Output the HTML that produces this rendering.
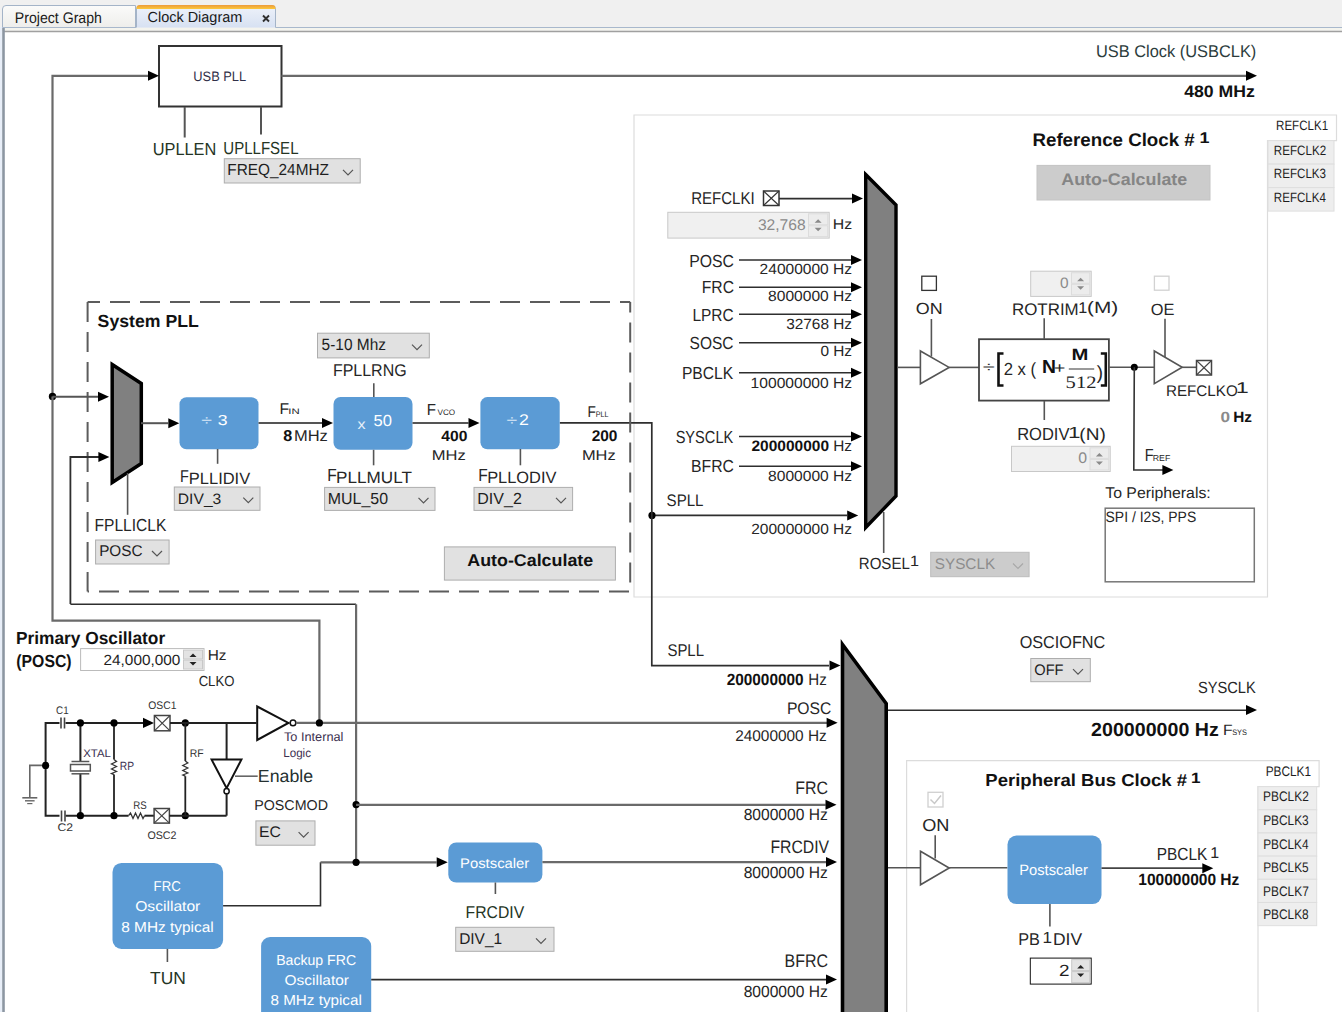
<!DOCTYPE html><html><head><meta charset="utf-8"><style>html,body{margin:0;padding:0;background:#fff;overflow:hidden}svg{display:block}</style></head><body>
<svg width="1342" height="1012" viewBox="0 0 1342 1012" font-family="Liberation Sans" text-rendering="geometricPrecision">
<defs><linearGradient id="tabg" x1="0" y1="0" x2="0" y2="1"><stop offset="0" stop-color="#fbfbfa"/><stop offset="1" stop-color="#eeeeeb"/></linearGradient><linearGradient id="tabs" x1="0" y1="0" x2="0" y2="1"><stop offset="0" stop-color="#eef2fa"/><stop offset="1" stop-color="#d7e1f2"/></linearGradient><linearGradient id="org" x1="0" y1="0" x2="0" y2="1"><stop offset="0" stop-color="#ec9a3c"/><stop offset="1" stop-color="#fcc93a"/></linearGradient></defs>
<rect x="0" y="0" width="1342.0" height="31.0" fill="#f0f0f0" stroke="none" stroke-width="1" rx="0"/>
<path d="M2.5,27.5 L2.5,9 Q2.5,5.5 6,5.5 L135.5,5.5 L135.5,27.5" fill="url(#tabg)" stroke="#a4b4c8" stroke-width="1"/>
<text x="14.84" y="22.6" font-size="15.41" font-weight="normal" fill="#1a1a1a" textLength="87.07" lengthAdjust="spacingAndGlyphs" font-family="Liberation Sans">Project Graph</text>
<path d="M136.5,27.5 L136.5,9 Q136.5,5.5 140,5.5 L272,5.5 Q275.5,5.5 275.5,9 L275.5,27.5" fill="url(#tabs)" stroke="#a4b4c8" stroke-width="1"/>
<path d="M136.5,9 L136.5,8 Q136.5,5 140,5 L272,5 Q275.5,5 275.5,8 L275.5,9 Z" fill="url(#org)"/>
<text x="147.48" y="22.1" font-size="14.68" font-weight="normal" fill="#1a1a1a" textLength="94.87" lengthAdjust="spacingAndGlyphs" font-family="Liberation Sans">Clock Diagram</text>
<path d="M263,15.5 L269,21.5 M269,15.5 L263,21.5" stroke="#303030" stroke-width="1.9"/>
<line x1="0" y1="27.5" x2="136" y2="27.5" stroke="#a8b8cc" stroke-width="1"/>
<line x1="275.5" y1="27.5" x2="1342" y2="27.5" stroke="#a8b8cc" stroke-width="1"/>
<rect x="0" y="28" width="1342.0" height="2.5" fill="#f4f4ee" stroke="none" stroke-width="1" rx="0"/>
<line x1="3" y1="31.5" x2="1342" y2="31.5" stroke="#a0a0a0" stroke-width="1.6"/>
<rect x="0" y="27" width="2.2" height="985.0" fill="#e8eef8" stroke="none" stroke-width="1" rx="0"/>
<line x1="3.5" y1="28" x2="3.5" y2="1012" stroke="#8c96a2" stroke-width="2.6"/>
<rect x="159" y="46" width="122.5" height="60.5" fill="#fff" stroke="#333" stroke-width="2" rx="0"/>
<text x="193.31" y="81.4" font-size="13.66" font-weight="normal" fill="#303048" textLength="52.82" lengthAdjust="spacingAndGlyphs" font-family="Liberation Sans">USB PLL</text>
<polyline points="52.5,396.5 52.5,75.8 148,75.8" stroke="#6a6a6a" stroke-width="2.2" fill="none" stroke-linejoin="miter"/>
<polygon points="159,75.8 148,70.8 148,80.8" stroke="none" stroke-width="0" fill="#000" stroke-linejoin="miter"/>
<line x1="281.5" y1="75.8" x2="1246" y2="75.8" stroke="#6a6a6a" stroke-width="2.2"/>
<polygon points="1257,75.8 1246,70.8 1246,80.8" stroke="none" stroke-width="0" fill="#000" stroke-linejoin="miter"/>
<line x1="184.7" y1="107" x2="184.7" y2="137.5" stroke="#555" stroke-width="2"/>
<line x1="261" y1="107" x2="261" y2="134.6" stroke="#555" stroke-width="2"/>
<text x="152.74" y="154.5" font-size="17.44" font-weight="normal" fill="#243424" textLength="63.59" lengthAdjust="spacingAndGlyphs" font-family="Liberation Sans">UPLLEN</text>
<text x="223.34" y="153.5" font-size="17.44" font-weight="normal" fill="#243424" textLength="75.16" lengthAdjust="spacingAndGlyphs" font-family="Liberation Sans">UPLLFSEL</text>
<rect x="224.3" y="158.7" width="135.9" height="24.3" fill="#e1e1e1" stroke="#adadad" stroke-width="1" rx="0"/>
<text x="227.34" y="175.3" font-size="15.99" font-weight="normal" fill="#1e1e1e" textLength="101.63" lengthAdjust="spacingAndGlyphs" font-family="Liberation Sans">FREQ_24MHZ</text>
<polyline points="343.0,169.85 348,174.85 353.0,169.85" fill="none" stroke="#555" stroke-width="1.2"/>
<text x="1095.94" y="57.3" font-size="17.01" font-weight="normal" fill="#2c3c3c" textLength="160.38" lengthAdjust="spacingAndGlyphs" font-family="Liberation Sans">USB Clock (USBCLK)</text>
<text x="1184.23" y="97.0" font-size="16.57" font-weight="bold" fill="#111" textLength="70.71" lengthAdjust="spacingAndGlyphs" font-family="Liberation Sans">480 MHz</text>
<path d="M634,115 H1336.5 V140.6 H1267.5 V597 H634 Z" fill="#fff" stroke="#dcdcdc" stroke-width="1.2"/>
<rect x="1268" y="140.6" width="66.0" height="23.5" fill="#eeeeee" stroke="#dedede" stroke-width="1" rx="0"/>
<text x="1273.85" y="154.5" font-size="13.52" font-weight="normal" fill="#1e1e1e" textLength="52.24" lengthAdjust="spacingAndGlyphs" font-family="Liberation Sans">REFCLK2</text>
<rect x="1268" y="164.1" width="66.0" height="23.5" fill="#eeeeee" stroke="#dedede" stroke-width="1" rx="0"/>
<text x="1273.85" y="178.0" font-size="13.52" font-weight="normal" fill="#1e1e1e" textLength="52.15" lengthAdjust="spacingAndGlyphs" font-family="Liberation Sans">REFCLK3</text>
<rect x="1268" y="187.6" width="66.0" height="23.5" fill="#eeeeee" stroke="#dedede" stroke-width="1" rx="0"/>
<text x="1273.85" y="201.6" font-size="13.52" font-weight="normal" fill="#1e1e1e" textLength="51.99" lengthAdjust="spacingAndGlyphs" font-family="Liberation Sans">REFCLK4</text>
<text x="1276.05" y="130.0" font-size="13.52" font-weight="normal" fill="#1e1e1e" textLength="52.01" lengthAdjust="spacingAndGlyphs" font-family="Liberation Sans">REFCLK1</text>
<text x="1032.47" y="145.5" font-size="18.31" font-weight="bold" fill="#111" textLength="162.21" lengthAdjust="spacingAndGlyphs" font-family="Liberation Sans">Reference Clock #</text>
<text x="1199.48" y="142.6" font-size="15.50" font-weight="bold" fill="#111" textLength="10.00" lengthAdjust="spacingAndGlyphs" font-family="Liberation Sans">1</text>
<rect x="1037" y="165.4" width="173.0" height="34.6" fill="#cccccc" stroke="#c4c4c4" stroke-width="1" rx="0"/>
<text x="1061.27" y="184.7" font-size="16.86" font-weight="bold" fill="#858585" textLength="125.94" lengthAdjust="spacingAndGlyphs" font-family="Liberation Sans">Auto-Calculate</text>
<text x="691.17" y="203.8" font-size="17.15" font-weight="normal" fill="#262626" textLength="63.52" lengthAdjust="spacingAndGlyphs" font-family="Liberation Sans">REFCLKI</text>
<rect x="763.5" y="191" width="15.5" height="14.5" fill="#fff" stroke="#333" stroke-width="1.5" rx="0"/>
<line x1="763.5" y1="191" x2="779" y2="205.5" stroke="#333" stroke-width="1.1"/>
<line x1="763.5" y1="205.5" x2="779" y2="191" stroke="#333" stroke-width="1.1"/>
<line x1="779" y1="198.6" x2="852" y2="198.6" stroke="#2e2e2e" stroke-width="1.6"/>
<polygon points="863,198.6 852,193.6 852,203.6" stroke="none" stroke-width="0" fill="#000" stroke-linejoin="miter"/>
<rect x="667.8" y="212.3" width="161.4" height="25.8" fill="#f0f0f0" stroke="#c8c8c8" stroke-width="1" rx="0"/>
<text x="757.91" y="229.9" font-size="15.55" font-weight="normal" fill="#8a8a8a" textLength="47.77" lengthAdjust="spacingAndGlyphs" font-family="Liberation Sans">32,768</text>
<rect x="808.5" y="213.8" width="19.2" height="10.9" fill="#ececec" stroke="#dcdcdc" stroke-width="1" rx="0"/>
<rect x="808.5" y="225.7" width="19.2" height="10.9" fill="#ececec" stroke="#dcdcdc" stroke-width="1" rx="0"/>
<polygon points="814.6,222.7 821.6,222.7 818.1,219.2" stroke="none" stroke-width="0" fill="#8a8a8a" stroke-linejoin="miter"/>
<polygon points="814.6,227.7 821.6,227.7 818.1,231.2" stroke="none" stroke-width="0" fill="#8a8a8a" stroke-linejoin="miter"/>
<text x="832.70" y="229.0" font-size="14.24" font-weight="normal" fill="#262626" textLength="19.38" lengthAdjust="spacingAndGlyphs" font-family="Liberation Sans">Hz</text>
<text x="689.20" y="267.1" font-size="17.44" font-weight="normal" fill="#262626" textLength="44.78" lengthAdjust="spacingAndGlyphs" font-family="Liberation Sans">POSC</text>
<line x1="739" y1="260" x2="851" y2="260" stroke="#2e2e2e" stroke-width="1.6"/>
<polygon points="862,260 851,255 851,265" stroke="none" stroke-width="0" fill="#000" stroke-linejoin="miter"/>
<text x="759.62" y="273.6" font-size="14.83" font-weight="normal" fill="#262626" textLength="92.44" lengthAdjust="spacingAndGlyphs" font-family="Liberation Sans">24000000 Hz</text>
<text x="701.71" y="293.2" font-size="17.44" font-weight="normal" fill="#262626" textLength="32.27" lengthAdjust="spacingAndGlyphs" font-family="Liberation Sans">FRC</text>
<line x1="739" y1="287.2" x2="851" y2="287.2" stroke="#2e2e2e" stroke-width="1.6"/>
<polygon points="862,287.2 851,282.2 851,292.2" stroke="none" stroke-width="0" fill="#000" stroke-linejoin="miter"/>
<text x="768.13" y="300.6" font-size="14.83" font-weight="normal" fill="#262626" textLength="83.93" lengthAdjust="spacingAndGlyphs" font-family="Liberation Sans">8000000 Hz</text>
<text x="692.43" y="321.4" font-size="17.44" font-weight="normal" fill="#262626" textLength="41.25" lengthAdjust="spacingAndGlyphs" font-family="Liberation Sans">LPRC</text>
<line x1="739" y1="314.3" x2="851" y2="314.3" stroke="#2e2e2e" stroke-width="1.6"/>
<polygon points="862,314.3 851,309.3 851,319.3" stroke="none" stroke-width="0" fill="#000" stroke-linejoin="miter"/>
<text x="786.22" y="328.9" font-size="14.83" font-weight="normal" fill="#262626" textLength="65.83" lengthAdjust="spacingAndGlyphs" font-family="Liberation Sans">32768 Hz</text>
<text x="689.60" y="348.8" font-size="17.44" font-weight="normal" fill="#262626" textLength="43.97" lengthAdjust="spacingAndGlyphs" font-family="Liberation Sans">SOSC</text>
<line x1="739" y1="342.8" x2="851" y2="342.8" stroke="#2e2e2e" stroke-width="1.6"/>
<polygon points="862,342.8 851,337.8 851,347.8" stroke="none" stroke-width="0" fill="#000" stroke-linejoin="miter"/>
<text x="820.40" y="355.9" font-size="14.83" font-weight="normal" fill="#262626" textLength="31.66" lengthAdjust="spacingAndGlyphs" font-family="Liberation Sans">0 Hz</text>
<text x="681.92" y="378.6" font-size="17.44" font-weight="normal" fill="#262626" textLength="51.26" lengthAdjust="spacingAndGlyphs" font-family="Liberation Sans">PBCLK</text>
<line x1="739" y1="372.7" x2="851" y2="372.7" stroke="#2e2e2e" stroke-width="1.6"/>
<polygon points="862,372.7 851,367.7 851,377.7" stroke="none" stroke-width="0" fill="#000" stroke-linejoin="miter"/>
<text x="750.61" y="388.0" font-size="14.83" font-weight="normal" fill="#262626" textLength="101.46" lengthAdjust="spacingAndGlyphs" font-family="Liberation Sans">100000000 Hz</text>
<text x="675.64" y="442.5" font-size="17.44" font-weight="normal" fill="#262626" textLength="57.62" lengthAdjust="spacingAndGlyphs" font-family="Liberation Sans">SYSCLK</text>
<line x1="739" y1="436.5" x2="851" y2="436.5" stroke="#2e2e2e" stroke-width="1.6"/>
<polygon points="862,436.5 851,431.5 851,441.5" stroke="none" stroke-width="0" fill="#000" stroke-linejoin="miter"/>
<text x="691.11" y="472.2" font-size="17.44" font-weight="normal" fill="#262626" textLength="42.88" lengthAdjust="spacingAndGlyphs" font-family="Liberation Sans">BFRC</text>
<line x1="739" y1="466.2" x2="851" y2="466.2" stroke="#2e2e2e" stroke-width="1.6"/>
<polygon points="862,466.2 851,461.2 851,471.2" stroke="none" stroke-width="0" fill="#000" stroke-linejoin="miter"/>
<text x="768.13" y="481.0" font-size="14.83" font-weight="normal" fill="#262626" textLength="83.93" lengthAdjust="spacingAndGlyphs" font-family="Liberation Sans">8000000 Hz</text>
<text x="751.47" y="450.7" font-size="15.12" font-weight="bold" fill="#111" textLength="77.55" lengthAdjust="spacingAndGlyphs" font-family="Liberation Sans">200000000</text>
<text x="833.24" y="450.7" font-size="15.12" font-weight="normal" fill="#262626" textLength="18.82" lengthAdjust="spacingAndGlyphs" font-family="Liberation Sans">Hz</text>
<text x="666.62" y="506.0" font-size="16.72" font-weight="normal" fill="#262626" textLength="36.88" lengthAdjust="spacingAndGlyphs" font-family="Liberation Sans">SPLL</text>
<line x1="652" y1="515.4" x2="847" y2="515.4" stroke="#2e2e2e" stroke-width="1.6"/>
<polygon points="858.2,515.4 847.2,510.4 847.2,520.4" stroke="none" stroke-width="0" fill="#000" stroke-linejoin="miter"/>
<text x="751.22" y="534.0" font-size="14.83" font-weight="normal" fill="#262626" textLength="100.84" lengthAdjust="spacingAndGlyphs" font-family="Liberation Sans">200000000 Hz</text>
<circle cx="652" cy="515.4" r="3.6" fill="#000"/>
<polyline points="559.7,422.8 651.8,422.8 651.8,665.6 829,665.6" stroke="#2e2e2e" stroke-width="1.7" fill="none" stroke-linejoin="miter"/>
<polygon points="865.7,174.5 896,205 896,496 865.7,527.5" stroke="#000" stroke-width="3.4" fill="#808080" stroke-linejoin="miter"/>
<line x1="883.7" y1="512" x2="883.7" y2="553" stroke="#555" stroke-width="1.6"/>
<text x="858.77" y="569.4" font-size="16.28" font-weight="normal" fill="#262626" textLength="51.03" lengthAdjust="spacingAndGlyphs" font-family="Liberation Sans">ROSEL</text>
<text x="909.97" y="566.4" font-size="15.00" font-weight="normal" fill="#262626" textLength="9.01" lengthAdjust="spacingAndGlyphs" font-family="Liberation Sans">1</text>
<rect x="930.7" y="552.3" width="98.4" height="24.4" fill="#cccccc" stroke="#bcbcbc" stroke-width="1" rx="0"/>
<text x="934.71" y="568.7" font-size="15.26" font-weight="normal" fill="#8c8c8c" textLength="60.46" lengthAdjust="spacingAndGlyphs" font-family="Liberation Sans">SYSCLK</text>
<polyline points="1013.0,563.5 1018,568.5 1023.0,563.5" fill="none" stroke="#a8a8a8" stroke-width="1.2"/>
<line x1="897" y1="367.4" x2="920.4" y2="367.4" stroke="#555" stroke-width="1.6"/>
<polygon points="920.4,351 949.1,367.4 920.4,383.8" stroke="#555" stroke-width="1.6" fill="#fff" stroke-linejoin="miter"/>
<line x1="949.1" y1="367.4" x2="979" y2="367.4" stroke="#555" stroke-width="1.6"/>
<line x1="931.4" y1="319" x2="931.4" y2="356.5" stroke="#555" stroke-width="1.6"/>
<rect x="921.8" y="276.2" width="14.6" height="14.2" fill="#fff" stroke="#333" stroke-width="1.3" rx="0"/>
<text x="915.76" y="314.4" font-size="15.99" font-weight="normal" fill="#262626" textLength="26.90" lengthAdjust="spacingAndGlyphs" font-family="Liberation Sans">ON</text>
<rect x="979" y="339.2" width="129.9" height="61.4" fill="#fff" stroke="#444" stroke-width="1.8" rx="0"/>
<line x1="1044.2" y1="318.2" x2="1044.2" y2="339" stroke="#555" stroke-width="1.6"/>
<line x1="1044.3" y1="401" x2="1044.3" y2="420" stroke="#555" stroke-width="1.6"/>
<rect x="1030.7" y="271.2" width="60.5" height="25.2" fill="#f0f0f0" stroke="#c8c8c8" stroke-width="1" rx="0"/>
<text x="1060.00" y="287.9" font-size="15.12" font-weight="normal" fill="#8a8a8a" textLength="8.59" lengthAdjust="spacingAndGlyphs" font-family="Liberation Sans">0</text>
<rect x="1071.5" y="272.7" width="18.2" height="10.6" fill="#ececec" stroke="#dcdcdc" stroke-width="1" rx="0"/>
<rect x="1071.5" y="284.29999999999995" width="18.2" height="10.6" fill="#ececec" stroke="#dcdcdc" stroke-width="1" rx="0"/>
<polygon points="1077.1,281.29999999999995 1084.1,281.29999999999995 1080.6,277.79999999999995" stroke="none" stroke-width="0" fill="#8a8a8a" stroke-linejoin="miter"/>
<polygon points="1077.1,286.29999999999995 1084.1,286.29999999999995 1080.6,289.79999999999995" stroke="none" stroke-width="0" fill="#8a8a8a" stroke-linejoin="miter"/>
<text x="1012.01" y="315.0" font-size="16.86" font-weight="normal" fill="#262626" textLength="66.67" lengthAdjust="spacingAndGlyphs" font-family="Liberation Sans">ROTRIM</text>
<text x="1078.27" y="312.5" font-size="15.50" font-weight="normal" fill="#262626" textLength="9.01" lengthAdjust="spacingAndGlyphs" font-family="Liberation Sans">1</text>
<text x="1087.11" y="313.0" font-size="16.50" font-weight="normal" fill="#262626" textLength="31.18" lengthAdjust="spacingAndGlyphs" font-family="Liberation Sans">(M)</text>
<text x="982.82" y="371.5" font-size="15.00" font-weight="normal" fill="#333" textLength="12.06" lengthAdjust="spacingAndGlyphs" font-family="Liberation Sans">÷</text>
<path d="M1003.5,353.5 L998.5,353.5 L998.5,385.5 L1003.5,385.5" fill="none" stroke="#111" stroke-width="2.6"/>
<text x="1003.67" y="374.8" font-size="17.50" font-weight="normal" fill="#262626" textLength="32.41" lengthAdjust="spacingAndGlyphs" font-family="Liberation Sans">2 x (</text>
<text x="1042.12" y="373.0" font-size="19.00" font-weight="bold" fill="#111" textLength="13.98" lengthAdjust="spacingAndGlyphs" font-family="Liberation Sans">N</text>
<text x="1053.84" y="373.0" font-size="15.00" font-weight="normal" fill="#262626" textLength="11.63" lengthAdjust="spacingAndGlyphs" font-family="Liberation Sans">+</text>
<line x1="1068.8" y1="369" x2="1094.2" y2="369" stroke="#555" stroke-width="1.2"/>
<text x="1071.56" y="360.0" font-size="16.50" font-weight="bold" fill="#111" textLength="16.87" lengthAdjust="spacingAndGlyphs" font-family="Liberation Sans">M</text>
<text x="1065.61" y="387.9" font-size="17.50" font-weight="normal" fill="#262626" textLength="30.82" lengthAdjust="spacingAndGlyphs" font-family="Liberation Serif">512</text>
<text x="1096.71" y="379.0" font-size="19.00" font-weight="normal" fill="#262626" textLength="6.26" lengthAdjust="spacingAndGlyphs" font-family="Liberation Sans">)</text>
<path d="M1100.8,353.5 L1105.8,353.5 L1105.8,385.5 L1100.8,385.5" fill="none" stroke="#111" stroke-width="2.6"/>
<line x1="1109" y1="367.3" x2="1154.3" y2="367.3" stroke="#555" stroke-width="1.6"/>
<circle cx="1134.3" cy="367.3" r="3.5" fill="#000"/>
<polyline points="1134.3,367.3 1133.8,470 1163,470" stroke="#333" stroke-width="1.6" fill="none" stroke-linejoin="miter"/>
<polygon points="1173.4,470 1162.4,465 1162.4,475" stroke="none" stroke-width="0" fill="#000" stroke-linejoin="miter"/>
<text x="1144.71" y="461.3" font-size="17.59" font-weight="normal" fill="#262626" textLength="8.87" lengthAdjust="spacingAndGlyphs" font-family="Liberation Sans">F</text>
<text x="1152.78" y="461.3" font-size="8.70" font-weight="normal" fill="#262626" textLength="17.57" lengthAdjust="spacingAndGlyphs" font-family="Liberation Sans">REF</text>
<text x="1017.15" y="440.2" font-size="17.59" font-weight="normal" fill="#262626" textLength="52.32" lengthAdjust="spacingAndGlyphs" font-family="Liberation Sans">RODIV</text>
<text x="1068.09" y="438.0" font-size="16.00" font-weight="normal" fill="#262626" textLength="12.49" lengthAdjust="spacingAndGlyphs" font-family="Liberation Sans">1</text>
<text x="1079.32" y="440.0" font-size="17.00" font-weight="normal" fill="#262626" textLength="26.47" lengthAdjust="spacingAndGlyphs" font-family="Liberation Sans">(N)</text>
<rect x="1011.5" y="446.3" width="98.7" height="25.2" fill="#f0f0f0" stroke="#c8c8c8" stroke-width="1" rx="0"/>
<text x="1078.28" y="463.3" font-size="15.26" font-weight="normal" fill="#8a8a8a" textLength="8.82" lengthAdjust="spacingAndGlyphs" font-family="Liberation Sans">0</text>
<rect x="1090" y="447.8" width="18.7" height="10.6" fill="#ececec" stroke="#dcdcdc" stroke-width="1" rx="0"/>
<rect x="1090" y="459.4" width="18.7" height="10.6" fill="#ececec" stroke="#dcdcdc" stroke-width="1" rx="0"/>
<polygon points="1095.85,456.4 1102.85,456.4 1099.35,452.9" stroke="none" stroke-width="0" fill="#8a8a8a" stroke-linejoin="miter"/>
<polygon points="1095.85,461.4 1102.85,461.4 1099.35,464.9" stroke="none" stroke-width="0" fill="#8a8a8a" stroke-linejoin="miter"/>
<polygon points="1154.3,351 1182.2,367.3 1154.3,383.6" stroke="#555" stroke-width="1.6" fill="#fff" stroke-linejoin="miter"/>
<line x1="1165" y1="318.7" x2="1165" y2="357" stroke="#555" stroke-width="1.6"/>
<rect x="1154.4" y="276.2" width="14.6" height="14.0" fill="#fff" stroke="#d2d2d2" stroke-width="1.3" rx="0"/>
<text x="1150.83" y="314.8" font-size="16.28" font-weight="normal" fill="#262626" textLength="23.65" lengthAdjust="spacingAndGlyphs" font-family="Liberation Sans">OE</text>
<line x1="1182.2" y1="367.3" x2="1196" y2="367.3" stroke="#555" stroke-width="1.6"/>
<rect x="1196.5" y="360.5" width="15.0" height="14.5" fill="#fff" stroke="#444" stroke-width="1.5" rx="0"/>
<line x1="1196.5" y1="360.5" x2="1211.5" y2="375" stroke="#444" stroke-width="1.1"/>
<line x1="1196.5" y1="375" x2="1211.5" y2="360.5" stroke="#444" stroke-width="1.1"/>
<text x="1165.95" y="396.0" font-size="15.41" font-weight="normal" fill="#262626" textLength="71.78" lengthAdjust="spacingAndGlyphs" font-family="Liberation Sans">REFCLKO</text>
<text x="1235.72" y="393.4" font-size="15.50" font-weight="normal" fill="#262626" textLength="13.00" lengthAdjust="spacingAndGlyphs" font-family="Liberation Sans">1</text>
<text x="1220.63" y="422.2" font-size="14.83" font-weight="bold" fill="#8a8a8a" textLength="9.56" lengthAdjust="spacingAndGlyphs" font-family="Liberation Sans">0</text>
<text x="1233.29" y="422.2" font-size="14.83" font-weight="bold" fill="#111" textLength="18.77" lengthAdjust="spacingAndGlyphs" font-family="Liberation Sans">Hz</text>
<text x="1105.25" y="497.5" font-size="15.50" font-weight="normal" fill="#262626" textLength="105.49" lengthAdjust="spacingAndGlyphs" font-family="Liberation Sans">To Peripherals:</text>
<rect x="1105.2" y="508.2" width="149.1" height="73.6" fill="#fff" stroke="#777" stroke-width="1.5" rx="0"/>
<text x="1105.57" y="522.3" font-size="15.00" font-weight="normal" fill="#262626" textLength="90.65" lengthAdjust="spacingAndGlyphs" font-family="Liberation Sans">SPI / I2S, PPS</text>
<line x1="87.6" y1="302.1" x2="630.2" y2="302.1" stroke="#5c5c5c" stroke-width="2" stroke-dasharray="20 10" stroke-dashoffset="7.6"/>
<line x1="87.6" y1="302.1" x2="87.6" y2="591.4" stroke="#5c5c5c" stroke-width="2" stroke-dasharray="20 10" stroke-dashoffset="0"/>
<line x1="630.2" y1="302.1" x2="630.2" y2="591.4" stroke="#5c5c5c" stroke-width="2" stroke-dasharray="20 10" stroke-dashoffset="9.5"/>
<line x1="87.6" y1="591.4" x2="630.2" y2="591.4" stroke="#5c5c5c" stroke-width="2" stroke-dasharray="20 10" stroke-dashoffset="18.599999999999994"/>
<text x="97.60" y="327.0" font-size="17.44" font-weight="bold" fill="#111" textLength="101.23" lengthAdjust="spacingAndGlyphs" font-family="Liberation Sans">System PLL</text>
<polygon points="112.2,364.5 141.3,383.5 141.3,463.5 112.2,482.5" stroke="#000" stroke-width="3.5" fill="#808080" stroke-linejoin="miter"/>
<circle cx="52.5" cy="396.5" r="3.7" fill="#000"/>
<line x1="52.5" y1="396.8" x2="99" y2="396.8" stroke="#555" stroke-width="2"/>
<polygon points="109,396.8 98,391.8 98,401.8" stroke="none" stroke-width="0" fill="#000" stroke-linejoin="miter"/>
<polyline points="70.4,604 70.4,457 99,457" stroke="#2e2e2e" stroke-width="1.8" fill="none" stroke-linejoin="miter"/>
<polygon points="109.4,457 98.4,452 98.4,462" stroke="none" stroke-width="0" fill="#000" stroke-linejoin="miter"/>
<line x1="141" y1="423.2" x2="168" y2="423.2" stroke="#555" stroke-width="2"/>
<polygon points="179.3,423.2 168.3,418.2 168.3,428.2" stroke="none" stroke-width="0" fill="#000" stroke-linejoin="miter"/>
<line x1="127.6" y1="473" x2="127.6" y2="514.8" stroke="#555" stroke-width="1.6"/>
<text x="94.52" y="531.2" font-size="17.44" font-weight="normal" fill="#262626" textLength="71.75" lengthAdjust="spacingAndGlyphs" font-family="Liberation Sans">FPLLICLK</text>
<rect x="95.6" y="540.0" width="73.5" height="24.0" fill="#e1e1e1" stroke="#adadad" stroke-width="1" rx="0"/>
<text x="99.14" y="555.9" font-size="15.55" font-weight="normal" fill="#1e1e1e" textLength="43.42" lengthAdjust="spacingAndGlyphs" font-family="Liberation Sans">POSC</text>
<polyline points="152.0,551.0 157,556.0 162.0,551.0" fill="none" stroke="#555" stroke-width="1.2"/>
<rect x="179.5" y="397.3" width="79.0" height="51.9" fill="#5b9bd5" stroke="none" stroke-width="1" rx="7"/>
<text x="201.20" y="425.0" font-size="14.00" font-weight="normal" fill="#dbe9f7" textLength="10.71" lengthAdjust="spacingAndGlyphs" font-family="Liberation Sans">÷</text>
<text x="217.83" y="425.0" font-size="14.50" font-weight="normal" fill="#fff" textLength="9.84" lengthAdjust="spacingAndGlyphs" font-family="Liberation Sans">3</text>
<line x1="217.6" y1="449" x2="217.6" y2="463.8" stroke="#555" stroke-width="1.6"/>
<text x="180.11" y="481.7" font-size="17.00" font-weight="normal" fill="#262626" textLength="8.87" lengthAdjust="spacingAndGlyphs" font-family="Liberation Sans">F</text>
<text x="188.85" y="483.5" font-size="16.50" font-weight="normal" fill="#262626" textLength="61.32" lengthAdjust="spacingAndGlyphs" font-family="Liberation Sans">PLLIDIV</text>
<rect x="174.3" y="487.0" width="85.7" height="23.3" fill="#e1e1e1" stroke="#adadad" stroke-width="1" rx="0"/>
<text x="177.82" y="503.7" font-size="15.12" font-weight="normal" fill="#1e1e1e" textLength="43.46" lengthAdjust="spacingAndGlyphs" font-family="Liberation Sans">DIV_3</text>
<polyline points="243.3,497.65 248.3,502.65 253.3,497.65" fill="none" stroke="#555" stroke-width="1.2"/>
<line x1="258.5" y1="423" x2="322" y2="423" stroke="#555" stroke-width="2"/>
<polygon points="333,423 322,418 322,428" stroke="none" stroke-width="0" fill="#000" stroke-linejoin="miter"/>
<text x="279.41" y="413.8" font-size="15.50" font-weight="normal" fill="#262626" textLength="9.62" lengthAdjust="spacingAndGlyphs" font-family="Liberation Sans">F</text>
<text x="288.25" y="413.8" font-size="8.00" font-weight="normal" fill="#262626" textLength="11.37" lengthAdjust="spacingAndGlyphs" font-family="Liberation Sans">IN</text>
<text x="283.30" y="441.2" font-size="15.70" font-weight="bold" fill="#111" textLength="8.99" lengthAdjust="spacingAndGlyphs" font-family="Liberation Sans">8</text>
<text x="293.95" y="441.2" font-size="15.70" font-weight="normal" fill="#262626" textLength="33.86" lengthAdjust="spacingAndGlyphs" font-family="Liberation Sans">MHz</text>
<rect x="333.5" y="397" width="79.0" height="52.8" fill="#5b9bd5" stroke="none" stroke-width="1" rx="7"/>
<text x="357.62" y="428.7" font-size="14.00" font-weight="normal" fill="#e8f1fa" textLength="8.04" lengthAdjust="spacingAndGlyphs" font-family="Liberation Sans">x</text>
<text x="373.44" y="426.1" font-size="16.00" font-weight="normal" fill="#fff" textLength="18.40" lengthAdjust="spacingAndGlyphs" font-family="Liberation Sans">50</text>
<line x1="373.8" y1="383.3" x2="373.8" y2="397" stroke="#555" stroke-width="1.6"/>
<line x1="373.6" y1="449.8" x2="373.6" y2="465.3" stroke="#555" stroke-width="1.6"/>
<rect x="317.5" y="333.2" width="111.8" height="24.7" fill="#e1e1e1" stroke="#adadad" stroke-width="1" rx="0"/>
<text x="321.58" y="349.9" font-size="16.28" font-weight="normal" fill="#1e1e1e" textLength="64.38" lengthAdjust="spacingAndGlyphs" font-family="Liberation Sans">5-10 Mhz</text>
<polyline points="412.0,344.54999999999995 417,349.54999999999995 422.0,344.54999999999995" fill="none" stroke="#555" stroke-width="1.2"/>
<text x="332.89" y="376.1" font-size="17.01" font-weight="normal" fill="#262626" textLength="73.78" lengthAdjust="spacingAndGlyphs" font-family="Liberation Sans">FPLLRNG</text>
<text x="327.13" y="480.5" font-size="17.50" font-weight="normal" fill="#262626" textLength="9.49" lengthAdjust="spacingAndGlyphs" font-family="Liberation Sans">F</text>
<text x="336.10" y="482.6" font-size="16.50" font-weight="normal" fill="#262626" textLength="75.80" lengthAdjust="spacingAndGlyphs" font-family="Liberation Sans">PLLMULT</text>
<rect x="324.6" y="487.4" width="110.4" height="23.0" fill="#e1e1e1" stroke="#adadad" stroke-width="1" rx="0"/>
<text x="327.79" y="503.8" font-size="16.13" font-weight="normal" fill="#1e1e1e" textLength="60.21" lengthAdjust="spacingAndGlyphs" font-family="Liberation Sans">MUL_50</text>
<polyline points="418.5,497.9 423.5,502.9 428.5,497.9" fill="none" stroke="#555" stroke-width="1.2"/>
<line x1="412.5" y1="423" x2="468.5" y2="423" stroke="#555" stroke-width="2"/>
<polygon points="479.5,423 468.5,418 468.5,428" stroke="none" stroke-width="0" fill="#000" stroke-linejoin="miter"/>
<text x="426.86" y="414.5" font-size="16.00" font-weight="normal" fill="#262626" textLength="9.24" lengthAdjust="spacingAndGlyphs" font-family="Liberation Sans">F</text>
<text x="437.47" y="414.5" font-size="8.00" font-weight="normal" fill="#262626" textLength="17.62" lengthAdjust="spacingAndGlyphs" font-family="Liberation Sans">VCO</text>
<text x="441.27" y="441.2" font-size="14.83" font-weight="bold" fill="#111" textLength="26.07" lengthAdjust="spacingAndGlyphs" font-family="Liberation Sans">400</text>
<text x="431.84" y="459.5" font-size="14.10" font-weight="normal" fill="#262626" textLength="33.97" lengthAdjust="spacingAndGlyphs" font-family="Liberation Sans">MHz</text>
<rect x="480.4" y="397.1" width="79.3" height="52.2" fill="#5b9bd5" stroke="none" stroke-width="1" rx="7"/>
<text x="506.40" y="424.7" font-size="14.00" font-weight="normal" fill="#dbe9f7" textLength="10.71" lengthAdjust="spacingAndGlyphs" font-family="Liberation Sans">÷</text>
<text x="519.11" y="424.7" font-size="15.50" font-weight="normal" fill="#fff" textLength="9.88" lengthAdjust="spacingAndGlyphs" font-family="Liberation Sans">2</text>
<line x1="520.4" y1="449" x2="520.4" y2="465.3" stroke="#555" stroke-width="1.6"/>
<text x="478.13" y="480.5" font-size="17.50" font-weight="normal" fill="#262626" textLength="9.49" lengthAdjust="spacingAndGlyphs" font-family="Liberation Sans">F</text>
<text x="487.15" y="482.6" font-size="16.50" font-weight="normal" fill="#262626" textLength="69.31" lengthAdjust="spacingAndGlyphs" font-family="Liberation Sans">PLLODIV</text>
<rect x="474.0" y="487.4" width="98.6" height="23.0" fill="#e1e1e1" stroke="#adadad" stroke-width="1" rx="0"/>
<text x="477.29" y="503.8" font-size="16.13" font-weight="normal" fill="#1e1e1e" textLength="44.52" lengthAdjust="spacingAndGlyphs" font-family="Liberation Sans">DIV_2</text>
<polyline points="556.0,497.9 561,502.9 566.0,497.9" fill="none" stroke="#555" stroke-width="1.2"/>
<text x="587.38" y="417.0" font-size="15.50" font-weight="normal" fill="#262626" textLength="8.37" lengthAdjust="spacingAndGlyphs" font-family="Liberation Sans">F</text>
<text x="595.81" y="417.0" font-size="8.00" font-weight="normal" fill="#262626" textLength="12.72" lengthAdjust="spacingAndGlyphs" font-family="Liberation Sans">PLL</text>
<text x="591.68" y="441.1" font-size="15.55" font-weight="bold" fill="#111" textLength="25.75" lengthAdjust="spacingAndGlyphs" font-family="Liberation Sans">200</text>
<text x="581.95" y="459.7" font-size="14.10" font-weight="normal" fill="#262626" textLength="33.75" lengthAdjust="spacingAndGlyphs" font-family="Liberation Sans">MHz</text>
<rect x="444.4" y="546.9" width="171.0" height="33.2" fill="#e1e1e1" stroke="#adadad" stroke-width="1" rx="0"/>
<text x="467.27" y="566.2" font-size="17.01" font-weight="bold" fill="#111" textLength="125.94" lengthAdjust="spacingAndGlyphs" font-family="Liberation Sans">Auto-Calculate</text>
<text x="15.96" y="644.0" font-size="17.59" font-weight="bold" fill="#111" textLength="149.19" lengthAdjust="spacingAndGlyphs" font-family="Liberation Sans">Primary Oscillator</text>
<text x="16.33" y="667.3" font-size="17.50" font-weight="bold" fill="#111" textLength="55.25" lengthAdjust="spacingAndGlyphs" font-family="Liberation Sans">(POSC)</text>
<rect x="80.6" y="648.6" width="123.4" height="21.9" fill="#ffffff" stroke="#bbbbbb" stroke-width="1" rx="0"/>
<text x="103.53" y="664.5" font-size="14.83" font-weight="normal" fill="#1e1e1e" textLength="76.85" lengthAdjust="spacingAndGlyphs" font-family="Liberation Sans">24,000,000</text>
<rect x="183.5" y="650.1" width="19.0" height="8.9" fill="#e3e3e3" stroke="#c8c8c8" stroke-width="1" rx="0"/>
<rect x="183.5" y="660.05" width="19.0" height="9.0" fill="#e3e3e3" stroke="#c8c8c8" stroke-width="1" rx="0"/>
<polygon points="189.5,657.05 196.5,657.05 193.0,653.55" stroke="none" stroke-width="0" fill="#222" stroke-linejoin="miter"/>
<polygon points="189.5,662.05 196.5,662.05 193.0,665.55" stroke="none" stroke-width="0" fill="#222" stroke-linejoin="miter"/>
<text x="207.74" y="659.9" font-size="14.39" font-weight="normal" fill="#262626" textLength="18.82" lengthAdjust="spacingAndGlyphs" font-family="Liberation Sans">Hz</text>
<text x="198.64" y="686.0" font-size="14.53" font-weight="normal" fill="#262626" textLength="35.79" lengthAdjust="spacingAndGlyphs" font-family="Liberation Sans">CLKO</text>
<polyline points="319.4,722.9 319.4,620.7 52.5,620.7 52.5,396.5" stroke="#6a6a6a" stroke-width="2.2" fill="none" stroke-linejoin="miter"/>
<line x1="70.4" y1="604.2" x2="356.1" y2="604.2" stroke="#2e2e2e" stroke-width="1.6"/>
<line x1="356.1" y1="604.2" x2="356.1" y2="862.3" stroke="#6a6a6a" stroke-width="2.2"/>
<polyline points="59.5,722.9 45.6,722.9 45.6,815.7 59.5,815.7" stroke="#222" stroke-width="2" fill="none" stroke-linejoin="miter"/>
<line x1="65.5" y1="722.9" x2="143" y2="722.9" stroke="#222" stroke-width="2"/>
<polygon points="154,722.9 143,717.6999999999999 143,728.1" stroke="none" stroke-width="0" fill="#000" stroke-linejoin="miter"/>
<line x1="65.5" y1="815.7" x2="128.6" y2="815.7" stroke="#222" stroke-width="2"/>
<line x1="61" y1="717.5" x2="61" y2="728.5" stroke="#444" stroke-width="1.6"/>
<line x1="64.5" y1="717.5" x2="64.5" y2="728.5" stroke="#444" stroke-width="1.6"/>
<line x1="61.5" y1="810.5" x2="61.5" y2="821.5" stroke="#444" stroke-width="1.6"/>
<line x1="65" y1="810.5" x2="65" y2="821.5" stroke="#444" stroke-width="1.6"/>
<text x="56.11" y="713.7" font-size="11.00" font-weight="normal" fill="#333" textLength="12.57" lengthAdjust="spacingAndGlyphs" font-family="Liberation Sans">C1</text>
<text x="57.59" y="830.7" font-size="11.00" font-weight="normal" fill="#333" textLength="15.52" lengthAdjust="spacingAndGlyphs" font-family="Liberation Sans">C2</text>
<polyline points="45.6,765.4 29.8,765.4 29.8,797.5" stroke="#666" stroke-width="1.6" fill="none" stroke-linejoin="miter"/>
<line x1="22.3" y1="797.8" x2="37.3" y2="797.8" stroke="#666" stroke-width="1.6"/>
<line x1="25" y1="800.8" x2="34.6" y2="800.8" stroke="#666" stroke-width="1.4"/>
<line x1="27.2" y1="803.6" x2="32.4" y2="803.6" stroke="#666" stroke-width="1.2"/>
<circle cx="45.6" cy="765.4" r="3.6" fill="#000"/>
<line x1="80.4" y1="722.9" x2="80.4" y2="761.5" stroke="#222" stroke-width="2"/>
<line x1="80.4" y1="773.5" x2="80.4" y2="815.7" stroke="#222" stroke-width="2"/>
<line x1="71.5" y1="761.5" x2="89.3" y2="761.5" stroke="#555" stroke-width="1.5"/>
<rect x="70.5" y="764.5" width="19.8" height="6.5" fill="#fff" stroke="#555" stroke-width="1.5" rx="0"/>
<line x1="71.5" y1="773.8" x2="89.3" y2="773.8" stroke="#555" stroke-width="1.5"/>
<text x="83.25" y="757.2" font-size="11.00" font-weight="normal" fill="#3a3050" textLength="27.52" lengthAdjust="spacingAndGlyphs" font-family="Liberation Sans">XTAL</text>
<line x1="114" y1="722.9" x2="114" y2="759.6" stroke="#222" stroke-width="1.8"/>
<line x1="114" y1="774.6" x2="114" y2="815.7" stroke="#222" stroke-width="1.8"/>
<polyline points="114,759.6 116.5,761.5 111.5,764 116.5,766.5 111.5,769 116.5,771.5 111.5,773.5 114,774.6" fill="none" stroke="#333" stroke-width="1.3"/>
<text x="119.86" y="769.8" font-size="12.00" font-weight="normal" fill="#3a3050" textLength="14.28" lengthAdjust="spacingAndGlyphs" font-family="Liberation Sans">RP</text>
<polyline points="128.6,815.7 130.5,813 133,818.5 135.5,813 138,818.5 140.5,813 143,818.5 144.5,815.7" fill="none" stroke="#333" stroke-width="1.3"/>
<line x1="144.5" y1="815.7" x2="154" y2="815.7" stroke="#222" stroke-width="2"/>
<text x="133.31" y="808.6" font-size="11.00" font-weight="normal" fill="#333" textLength="13.43" lengthAdjust="spacingAndGlyphs" font-family="Liberation Sans">RS</text>
<rect x="154.4" y="715.5" width="15.6" height="15.3" fill="#fff" stroke="#444" stroke-width="1.5" rx="0"/>
<line x1="154.4" y1="715.5" x2="170" y2="730.8" stroke="#444" stroke-width="1.1"/>
<line x1="154.4" y1="730.8" x2="170" y2="715.5" stroke="#444" stroke-width="1.1"/>
<rect x="154.1" y="808.5" width="15.3" height="14.6" fill="#fff" stroke="#444" stroke-width="1.5" rx="0"/>
<line x1="154.1" y1="808.5" x2="169.4" y2="823.1" stroke="#444" stroke-width="1.1"/>
<line x1="154.1" y1="823.1" x2="169.4" y2="808.5" stroke="#444" stroke-width="1.1"/>
<text x="148.31" y="708.7" font-size="11.00" font-weight="normal" fill="#333" textLength="28.18" lengthAdjust="spacingAndGlyphs" font-family="Liberation Sans">OSC1</text>
<text x="147.40" y="839.4" font-size="11.00" font-weight="normal" fill="#333" textLength="29.14" lengthAdjust="spacingAndGlyphs" font-family="Liberation Sans">OSC2</text>
<circle cx="80.4" cy="722.9" r="3.6" fill="#000"/>
<circle cx="80.4" cy="815.7" r="3.6" fill="#000"/>
<circle cx="114" cy="722.9" r="3.6" fill="#000"/>
<circle cx="114" cy="815.7" r="3.6" fill="#000"/>
<circle cx="185.3" cy="722.9" r="3.6" fill="#000"/>
<circle cx="185.3" cy="815.7" r="3.6" fill="#000"/>
<line x1="170" y1="722.9" x2="256.5" y2="722.9" stroke="#222" stroke-width="2"/>
<line x1="169.4" y1="815.7" x2="226.6" y2="815.7" stroke="#222" stroke-width="2"/>
<line x1="185.3" y1="722.9" x2="185.3" y2="761.1" stroke="#222" stroke-width="1.8"/>
<line x1="185.3" y1="776.2" x2="185.3" y2="815.7" stroke="#222" stroke-width="1.8"/>
<polyline points="185.3,761.1 187.8,763 182.8,765.5 187.8,768 182.8,770.5 187.8,773 182.8,775 185.3,776.2" fill="none" stroke="#333" stroke-width="1.3"/>
<text x="189.75" y="757.2" font-size="11.00" font-weight="normal" fill="#333" textLength="13.87" lengthAdjust="spacingAndGlyphs" font-family="Liberation Sans">RF</text>
<line x1="226.6" y1="722.9" x2="226.6" y2="759.6" stroke="#222" stroke-width="2"/>
<polygon points="211.6,759.6 241.4,759.6 226.6,788.2" stroke="#111" stroke-width="2" fill="#fff" stroke-linejoin="miter"/>
<circle cx="226.6" cy="791.2" r="2.6" fill="#fff" stroke="#111" stroke-width="1.5"/>
<line x1="226.6" y1="793.8" x2="226.6" y2="815.7" stroke="#222" stroke-width="2"/>
<line x1="235" y1="776.2" x2="257.7" y2="776.2" stroke="#666" stroke-width="1.6"/>
<text x="257.85" y="782.0" font-size="17.50" font-weight="normal" fill="#243030" textLength="55.23" lengthAdjust="spacingAndGlyphs" font-family="Liberation Sans">Enable</text>
<polygon points="257.2,706.5 288.4,722.9 257.2,740" stroke="#111" stroke-width="2" fill="#fff" stroke-linejoin="miter"/>
<circle cx="293" cy="722.9" r="2.8" fill="#fff" stroke="#111" stroke-width="1.5"/>
<line x1="295.8" y1="722.9" x2="829" y2="722.9" stroke="#6a6a6a" stroke-width="2.2"/>
<polygon points="837.6,722.7 826.6,717.7 826.6,727.7" stroke="none" stroke-width="0" fill="#000" stroke-linejoin="miter"/>
<circle cx="319.4" cy="722.9" r="3.6" fill="#000"/>
<text x="283.92" y="741.4" font-size="12.50" font-weight="normal" fill="#3c3050" textLength="59.53" lengthAdjust="spacingAndGlyphs" font-family="Liberation Sans">To Internal</text>
<text x="283.25" y="757.2" font-size="12.00" font-weight="normal" fill="#3c3050" textLength="27.75" lengthAdjust="spacingAndGlyphs" font-family="Liberation Sans">Logic</text>
<text x="254.23" y="809.7" font-size="14.24" font-weight="normal" fill="#262626" textLength="73.74" lengthAdjust="spacingAndGlyphs" font-family="Liberation Sans">POSCMOD</text>
<rect x="255.9" y="820.9" width="59.1" height="24.3" fill="#e1e1e1" stroke="#adadad" stroke-width="1" rx="0"/>
<text x="259.11" y="837.4" font-size="15.41" font-weight="normal" fill="#1e1e1e" textLength="21.88" lengthAdjust="spacingAndGlyphs" font-family="Liberation Sans">EC</text>
<polyline points="298.6,832.05 303.6,837.05 308.6,832.05" fill="none" stroke="#555" stroke-width="1.2"/>
<rect x="112.5" y="862.9" width="110.6" height="86.0" fill="#5b9bd5" stroke="none" stroke-width="1" rx="9"/>
<text x="153.62" y="891.1" font-size="14.24" font-weight="normal" fill="#fff" textLength="27.18" lengthAdjust="spacingAndGlyphs" font-family="Liberation Sans">FRC</text>
<text x="135.16" y="911.4" font-size="14.20" font-weight="normal" fill="#fff" textLength="65.19" lengthAdjust="spacingAndGlyphs" font-family="Liberation Sans">Oscillator</text>
<text x="121.24" y="931.8" font-size="14.50" font-weight="normal" fill="#fff" textLength="92.49" lengthAdjust="spacingAndGlyphs" font-family="Liberation Sans">8 MHz typical</text>
<polyline points="223.1,905.7 320.5,905.7 320.5,862.3" stroke="#2e2e2e" stroke-width="1.6" fill="none" stroke-linejoin="miter"/>
<line x1="320.5" y1="862.3" x2="436.6" y2="862.3" stroke="#6a6a6a" stroke-width="2.2"/>
<polygon points="447.7,862.3 436.7,857.3 436.7,867.3" stroke="none" stroke-width="0" fill="#000" stroke-linejoin="miter"/>
<circle cx="356.1" cy="862.3" r="3.6" fill="#000"/>
<circle cx="356.1" cy="804.6" r="3.6" fill="#000"/>
<line x1="356.1" y1="804.8" x2="825.7" y2="804.8" stroke="#6a6a6a" stroke-width="2.2"/>
<polygon points="836.5,804.8 825.5,799.8 825.5,809.8" stroke="none" stroke-width="0" fill="#000" stroke-linejoin="miter"/>
<line x1="167.4" y1="948.9" x2="167.4" y2="962" stroke="#555" stroke-width="1.6"/>
<text x="150.12" y="983.5" font-size="17.59" font-weight="normal" fill="#243424" textLength="35.80" lengthAdjust="spacingAndGlyphs" font-family="Liberation Sans">TUN</text>
<rect x="448.3" y="842.4" width="94.1" height="40.1" fill="#5b9bd5" stroke="none" stroke-width="1" rx="8"/>
<text x="460.09" y="867.6" font-size="14.00" font-weight="normal" fill="#fff" textLength="69.16" lengthAdjust="spacingAndGlyphs" font-family="Liberation Sans">Postscaler</text>
<line x1="542.4" y1="862.1" x2="826" y2="862.1" stroke="#6a6a6a" stroke-width="2.2"/>
<polygon points="837,862.1 826,857.1 826,867.1" stroke="none" stroke-width="0" fill="#000" stroke-linejoin="miter"/>
<line x1="495.4" y1="882.5" x2="495.4" y2="894" stroke="#555" stroke-width="1.6"/>
<text x="465.61" y="917.5" font-size="17.15" font-weight="normal" fill="#243424" textLength="58.56" lengthAdjust="spacingAndGlyphs" font-family="Liberation Sans">FRCDIV</text>
<rect x="455.7" y="927.3" width="98.3" height="24.0" fill="#e1e1e1" stroke="#adadad" stroke-width="1" rx="0"/>
<text x="459.13" y="943.6" font-size="15.70" font-weight="normal" fill="#1e1e1e" textLength="43.02" lengthAdjust="spacingAndGlyphs" font-family="Liberation Sans">DIV_1</text>
<polyline points="536.0,938.3 541,943.3 546.0,938.3" fill="none" stroke="#555" stroke-width="1.2"/>
<rect x="261.1" y="937" width="110.1" height="93.0" fill="#5b9bd5" stroke="none" stroke-width="1" rx="9"/>
<text x="276.14" y="964.8" font-size="14.50" font-weight="normal" fill="#fff" textLength="79.99" lengthAdjust="spacingAndGlyphs" font-family="Liberation Sans">Backup FRC</text>
<text x="284.57" y="985.0" font-size="14.20" font-weight="normal" fill="#fff" textLength="64.38" lengthAdjust="spacingAndGlyphs" font-family="Liberation Sans">Oscillator</text>
<text x="270.45" y="1004.8" font-size="14.50" font-weight="normal" fill="#fff" textLength="91.37" lengthAdjust="spacingAndGlyphs" font-family="Liberation Sans">8 MHz typical</text>
<line x1="371.2" y1="979.6" x2="826" y2="979.6" stroke="#2e2e2e" stroke-width="1.7"/>
<polygon points="837,979.6 826,974.6 826,984.6" stroke="none" stroke-width="0" fill="#000" stroke-linejoin="miter"/>
<text x="667.43" y="656.3" font-size="17.01" font-weight="normal" fill="#262626" textLength="36.57" lengthAdjust="spacingAndGlyphs" font-family="Liberation Sans">SPLL</text>
<text x="726.68" y="684.9" font-size="16.28" font-weight="bold" fill="#111" textLength="76.94" lengthAdjust="spacingAndGlyphs" font-family="Liberation Sans">200000000</text>
<text x="808.26" y="684.9" font-size="16.28" font-weight="normal" fill="#262626" textLength="18.48" lengthAdjust="spacingAndGlyphs" font-family="Liberation Sans">Hz</text>
<polygon points="840.5,665.6 829.5,660.6 829.5,670.6" stroke="none" stroke-width="0" fill="#000" stroke-linejoin="miter"/>
<text x="786.91" y="713.6" font-size="16.86" font-weight="normal" fill="#262626" textLength="44.47" lengthAdjust="spacingAndGlyphs" font-family="Liberation Sans">POSC</text>
<text x="735.13" y="741.1" font-size="15.55" font-weight="normal" fill="#262626" textLength="91.63" lengthAdjust="spacingAndGlyphs" font-family="Liberation Sans">24000000 Hz</text>
<text x="795.29" y="793.6" font-size="18.02" font-weight="normal" fill="#262626" textLength="32.80" lengthAdjust="spacingAndGlyphs" font-family="Liberation Sans">FRC</text>
<text x="743.63" y="819.8" font-size="16.28" font-weight="normal" fill="#262626" textLength="84.14" lengthAdjust="spacingAndGlyphs" font-family="Liberation Sans">8000000 Hz</text>
<text x="770.41" y="852.6" font-size="18.02" font-weight="normal" fill="#262626" textLength="58.66" lengthAdjust="spacingAndGlyphs" font-family="Liberation Sans">FRCDIV</text>
<text x="743.63" y="878.3" font-size="16.28" font-weight="normal" fill="#262626" textLength="84.14" lengthAdjust="spacingAndGlyphs" font-family="Liberation Sans">8000000 Hz</text>
<text x="784.59" y="966.7" font-size="18.17" font-weight="normal" fill="#262626" textLength="43.50" lengthAdjust="spacingAndGlyphs" font-family="Liberation Sans">BFRC</text>
<text x="743.63" y="996.6" font-size="16.28" font-weight="normal" fill="#262626" textLength="84.14" lengthAdjust="spacingAndGlyphs" font-family="Liberation Sans">8000000 Hz</text>
<polygon points="842.5,644.5 886.2,703.5 886.2,1100 842.5,1100" stroke="#000" stroke-width="3.6" fill="#808080" stroke-linejoin="miter"/>
<line x1="888" y1="710.2" x2="1246" y2="710.2" stroke="#2e2e2e" stroke-width="1.6"/>
<polygon points="1257,710.1 1246,705.1 1246,715.1" stroke="none" stroke-width="0" fill="#000" stroke-linejoin="miter"/>
<text x="1197.94" y="693.4" font-size="16.28" font-weight="normal" fill="#262626" textLength="57.83" lengthAdjust="spacingAndGlyphs" font-family="Liberation Sans">SYSCLK</text>
<text x="1091.13" y="735.8" font-size="19.04" font-weight="bold" fill="#111" textLength="127.58" lengthAdjust="spacingAndGlyphs" font-family="Liberation Sans">200000000 Hz</text>
<text x="1223.01" y="734.8" font-size="15.00" font-weight="normal" fill="#262626" textLength="9.62" lengthAdjust="spacingAndGlyphs" font-family="Liberation Sans">F</text>
<text x="1232.17" y="734.8" font-size="8.00" font-weight="normal" fill="#262626" textLength="14.76" lengthAdjust="spacingAndGlyphs" font-family="Liberation Sans">SYS</text>
<text x="1019.64" y="647.5" font-size="17.30" font-weight="normal" fill="#262626" textLength="85.66" lengthAdjust="spacingAndGlyphs" font-family="Liberation Sans">OSCIOFNC</text>
<rect x="1030.8" y="658.5" width="59.5" height="23.2" fill="#e1e1e1" stroke="#adadad" stroke-width="1" rx="0"/>
<text x="1034.31" y="674.7" font-size="15.26" font-weight="normal" fill="#1e1e1e" textLength="29.27" lengthAdjust="spacingAndGlyphs" font-family="Liberation Sans">OFF</text>
<polyline points="1073.0,669.1 1078,674.1 1083.0,669.1" fill="none" stroke="#555" stroke-width="1.2"/>
<path d="M906.6,1100 V760.7 H1319.1 V786.6 H1258 V1100" fill="#fff" stroke="#dcdcdc" stroke-width="1.2"/>
<text x="1265.63" y="776.3" font-size="13.81" font-weight="normal" fill="#1e1e1e" textLength="45.45" lengthAdjust="spacingAndGlyphs" font-family="Liberation Sans">PBCLK1</text>
<rect x="1258" y="786.6" width="58.7" height="23.2" fill="#eeeeee" stroke="#dedede" stroke-width="1" rx="0"/>
<text x="1263.12" y="801.0" font-size="13.81" font-weight="normal" fill="#1e1e1e" textLength="45.68" lengthAdjust="spacingAndGlyphs" font-family="Liberation Sans">PBCLK2</text>
<rect x="1258" y="809.77" width="58.7" height="23.2" fill="#eeeeee" stroke="#dedede" stroke-width="1" rx="0"/>
<text x="1263.13" y="824.7" font-size="13.81" font-weight="normal" fill="#1e1e1e" textLength="45.59" lengthAdjust="spacingAndGlyphs" font-family="Liberation Sans">PBCLK3</text>
<rect x="1258" y="832.94" width="58.7" height="23.2" fill="#eeeeee" stroke="#dedede" stroke-width="1" rx="0"/>
<text x="1263.13" y="848.6" font-size="13.81" font-weight="normal" fill="#1e1e1e" textLength="45.42" lengthAdjust="spacingAndGlyphs" font-family="Liberation Sans">PBCLK4</text>
<rect x="1258" y="856.11" width="58.7" height="23.2" fill="#eeeeee" stroke="#dedede" stroke-width="1" rx="0"/>
<text x="1263.13" y="871.7" font-size="13.81" font-weight="normal" fill="#1e1e1e" textLength="45.57" lengthAdjust="spacingAndGlyphs" font-family="Liberation Sans">PBCLK5</text>
<rect x="1258" y="879.28" width="58.7" height="23.2" fill="#eeeeee" stroke="#dedede" stroke-width="1" rx="0"/>
<text x="1263.12" y="895.5" font-size="13.81" font-weight="normal" fill="#1e1e1e" textLength="45.68" lengthAdjust="spacingAndGlyphs" font-family="Liberation Sans">PBCLK7</text>
<rect x="1258" y="902.45" width="58.7" height="23.2" fill="#eeeeee" stroke="#dedede" stroke-width="1" rx="0"/>
<text x="1263.13" y="919.0" font-size="13.81" font-weight="normal" fill="#1e1e1e" textLength="45.59" lengthAdjust="spacingAndGlyphs" font-family="Liberation Sans">PBCLK8</text>
<text x="985.38" y="785.7" font-size="17.30" font-weight="bold" fill="#111" textLength="201.60" lengthAdjust="spacingAndGlyphs" font-family="Liberation Sans">Peripheral Bus Clock #</text>
<text x="1190.94" y="782.7" font-size="15.00" font-weight="bold" fill="#111" textLength="9.53" lengthAdjust="spacingAndGlyphs" font-family="Liberation Sans">1</text>
<line x1="888" y1="867.7" x2="920.5" y2="867.7" stroke="#555" stroke-width="1.6"/>
<polygon points="920.5,851.3 949.2,868.05 920.5,884.8" stroke="#555" stroke-width="1.6" fill="#fff" stroke-linejoin="miter"/>
<line x1="949.2" y1="867.7" x2="1007.4" y2="867.7" stroke="#555" stroke-width="1.6"/>
<line x1="935.2" y1="835.2" x2="935.2" y2="858.5" stroke="#555" stroke-width="1.6"/>
<rect x="928" y="792.3" width="15.0" height="14.7" fill="#fff" stroke="#d0d0d0" stroke-width="1.3" rx="0"/>
<polyline points="930.5,799.5 934.5,803.5 941,795.5" fill="none" stroke="#c8c8c8" stroke-width="1.5"/>
<text x="922.15" y="831.1" font-size="17.30" font-weight="normal" fill="#262626" textLength="27.22" lengthAdjust="spacingAndGlyphs" font-family="Liberation Sans">ON</text>
<rect x="1007.5" y="835.6" width="94.0" height="68.5" fill="#5b9bd5" stroke="none" stroke-width="1" rx="9"/>
<text x="1019.29" y="875.4" font-size="15.00" font-weight="normal" fill="#fff" textLength="68.65" lengthAdjust="spacingAndGlyphs" font-family="Liberation Sans">Postscaler</text>
<line x1="1101.5" y1="868.2" x2="1203" y2="868.2" stroke="#444" stroke-width="1.8"/>
<polygon points="1213.3,868.2 1202.3,863.2 1202.3,873.2" stroke="none" stroke-width="0" fill="#000" stroke-linejoin="miter"/>
<line x1="1049.9" y1="904.1" x2="1049.9" y2="926.5" stroke="#555" stroke-width="1.6"/>
<text x="1156.73" y="859.8" font-size="17.59" font-weight="normal" fill="#262626" textLength="50.64" lengthAdjust="spacingAndGlyphs" font-family="Liberation Sans">PBCLK</text>
<text x="1210.19" y="857.6" font-size="15.50" font-weight="normal" fill="#262626" textLength="8.88" lengthAdjust="spacingAndGlyphs" font-family="Liberation Sans">1</text>
<text x="1138.34" y="885.0" font-size="16.28" font-weight="bold" fill="#111" textLength="101.03" lengthAdjust="spacingAndGlyphs" font-family="Liberation Sans">100000000 Hz</text>
<text x="1018.27" y="944.6" font-size="17.15" font-weight="normal" fill="#262626" textLength="21.68" lengthAdjust="spacingAndGlyphs" font-family="Liberation Sans">PB</text>
<text x="1042.50" y="942.7" font-size="16.00" font-weight="normal" fill="#262626" textLength="9.53" lengthAdjust="spacingAndGlyphs" font-family="Liberation Sans">1</text>
<text x="1052.97" y="944.6" font-size="17.15" font-weight="normal" fill="#262626" textLength="29.10" lengthAdjust="spacingAndGlyphs" font-family="Liberation Sans">DIV</text>
<rect x="1030.3" y="958.1" width="60.9" height="26.0" fill="#ffffff" stroke="#111" stroke-width="1" rx="0"/>
<text x="1059.06" y="976.2" font-size="16.28" font-weight="normal" fill="#1e1e1e" textLength="10.49" lengthAdjust="spacingAndGlyphs" font-family="Liberation Sans">2</text>
<rect x="1071.7" y="959.6" width="18.0" height="11.0" fill="#e3e3e3" stroke="#c8c8c8" stroke-width="1" rx="0"/>
<rect x="1071.7" y="971.6" width="18.0" height="11.0" fill="#e3e3e3" stroke="#c8c8c8" stroke-width="1" rx="0"/>
<polygon points="1077.2,968.6 1084.2,968.6 1080.7,965.1" stroke="none" stroke-width="0" fill="#222" stroke-linejoin="miter"/>
<polygon points="1077.2,973.6 1084.2,973.6 1080.7,977.1" stroke="none" stroke-width="0" fill="#222" stroke-linejoin="miter"/>
</svg></body></html>
